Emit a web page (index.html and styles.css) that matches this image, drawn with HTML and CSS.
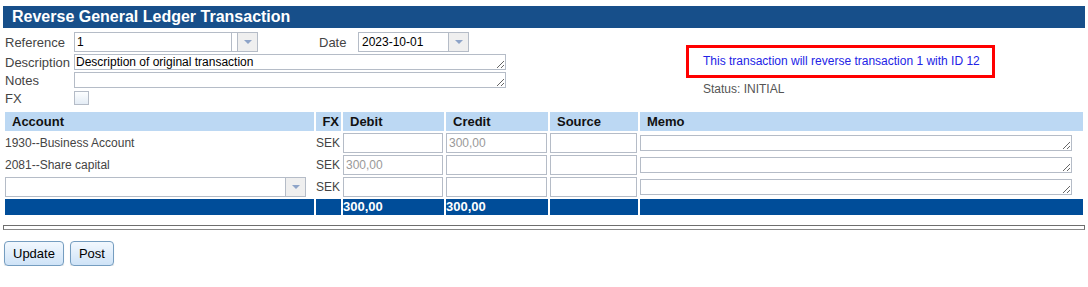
FILE: index.html
```html
<!DOCTYPE html>
<html>
<head>
<meta charset="utf-8">
<title>Reverse General Ledger Transaction</title>
<link rel="stylesheet" href="styles.css">
</head>
<body>
<div class="page">
  <h1 class="title">Reverse General Ledger Transaction</h1>
  <div class="top">
    <div class="form">
      <div class="row row-ref">
        <span class="lbl">Reference</span>
        <div class="combo combo-ref">
          <span class="val">1</span>
          <span class="valid"></span>
          <span class="arrow"><i></i></span>
        </div>
        <span class="lbl lbl-date">Date</span>
        <div class="combo combo-date">
          <span class="val">2023-10-01</span>
          <span class="arrow"><i></i></span>
        </div>
      </div>
      <div class="row row-ta">
        <span class="lbl">Description</span>
        <textarea class="ta" rows="1">Description of original transaction</textarea>
      </div>
      <div class="row row-ta">
        <span class="lbl">Notes</span>
        <textarea class="ta" rows="1"></textarea>
      </div>
      <div class="row row-fx">
        <span class="lbl">FX</span>
        <span class="check"></span>
      </div>
    </div>
    <div class="info">
      <div class="notice">This transaction will reverse transaction 1 with ID 12</div>
      <div class="status">Status: INITIAL</div>
    </div>
  </div>

  <table class="lines">
    <colgroup>
      <col class="c-acc"><col class="c-fx"><col class="c-deb"><col class="c-cred"><col class="c-src"><col class="c-memo">
    </colgroup>
    <thead>
      <tr><th>Account</th><th class="fx">FX</th><th>Debit</th><th>Credit</th><th>Source</th><th>Memo</th></tr>
    </thead>
    <tbody>
      <tr>
        <td class="acc">1930--Business Account</td>
        <td class="cur">SEK</td>
        <td><input class="fld" type="text"></td>
        <td><input class="fld" type="text" placeholder="300,00"></td>
        <td><input class="fld" type="text"></td>
        <td><textarea class="memo" rows="1"></textarea></td>
      </tr>
      <tr>
        <td class="acc">2081--Share capital</td>
        <td class="cur">SEK</td>
        <td><input class="fld" type="text" placeholder="300,00"></td>
        <td><input class="fld" type="text"></td>
        <td><input class="fld" type="text"></td>
        <td><textarea class="memo" rows="1"></textarea></td>
      </tr>
      <tr>
        <td class="acc">
          <div class="combo combo-acc">
            <span class="val"></span>
            <span class="arrow"><i></i></span>
          </div>
        </td>
        <td class="cur">SEK</td>
        <td><input class="fld" type="text"></td>
        <td><input class="fld" type="text"></td>
        <td><input class="fld" type="text"></td>
        <td><textarea class="memo" rows="1"></textarea></td>
      </tr>
    </tbody>
    <tfoot>
      <tr><td></td><td></td><td>300,00</td><td>300,00</td><td></td><td></td></tr>
    </tfoot>
  </table>

  <div class="sep"></div>

  <div class="buttons">
    <button class="btn" type="button">Update</button>
    <button class="btn" type="button">Post</button>
  </div>
</div>
</body>
</html>
```

FILE: styles.css
```css
html, body {
  margin: 0;
  padding: 0;
  background: #fff;
}
body {
  font-family: "Liberation Sans", Arial, sans-serif;
  font-size: 13px;
  color: #444;
}
.page {
  margin: 6px 3px 0 3px;
}
.title {
  margin: 0;
  height: 22px;
  line-height: 22px;
  background: #174f8a;
  color: #fff;
  font-size: 16px;
  font-weight: bold;
  padding-left: 9px;
}
.top {
  display: flex;
  margin-top: 4px;
}
.form {
  width: 503px;
  padding-left: 2px;
  box-sizing: border-box;
}
.row {
  display: flex;
  align-items: center;
  margin-bottom: 2px;
}
.row-ref { height: 20px; }
.row-ta { height: 16px; }
.row-fx { height: 16px; margin-bottom: 0; }
.lbl {
  width: 69px;
  flex: none;
  color: #444;
}
.lbl-date {
  width: 39px;
  margin-left: 61px;
}
.combo {
  display: flex;
  height: 20px;
  box-sizing: border-box;
  border: 1px solid #b5bcc7;
  background: #fff;
}
.combo .val {
  flex: 1;
  color: #000;
  padding-left: 2px;
  line-height: 18px;
  font-size: 12px;
}
.combo .valid {
  width: 5px;
  border-left: 1px solid #b5bcc7;
}
.combo .arrow {
  width: 19px;
  border-left: 1px solid #b5bcc7;
  background: #efefef;
  display: flex;
  align-items: center;
  justify-content: center;
}
.combo .arrow i {
  width: 0;
  height: 0;
  border-left: 4px solid transparent;
  border-right: 4px solid transparent;
  border-top: 4px solid #8ea4c8;
}
.combo-ref { width: 184px; }
.combo-date { width: 111px; }
.combo-date .val { padding-left: 3px; }
.combo-acc { width: 301px; }
.ta {
  width: 432px;
  height: 16px;
  box-sizing: border-box;
  border: 1px solid #b5bcc7;
  padding: 0 1px;
  margin: 0;
  font-family: "Liberation Sans", Arial, sans-serif;
  font-size: 12px;
  line-height: 14px;
  color: #000;
  overflow: hidden;
  resize: both;
}
.check {
  width: 15px;
  height: 14px;
  box-sizing: border-box;
  border: 1px solid #b5bcc7;
  background: linear-gradient(#fdfeff, #e4ecf5);
}
.info {
  margin-left: 180px;
  margin-top: 13px;
}
.notice {
  width: 309px;
  height: 33px;
  box-sizing: border-box;
  border: 3px solid #f00;
  color: #2323e6;
  font-size: 12px;
  line-height: 27px;
  padding-left: 14px;
}
.status {
  margin-top: 4px;
  padding-left: 17px;
  font-size: 12px;
  line-height: 15px;
  color: #555;
}
.lines {
  margin-top: 4px;
  width: 1082px;
  table-layout: fixed;
  border-collapse: separate;
  border-spacing: 2px;
}
.c-acc { width: 309px; }
.c-fx { width: 25px; }
.c-deb { width: 101px; }
.c-cred { width: 102px; }
.c-src { width: 88px; }
.c-memo { width: 443px; }
.lines th {
  background: #bcd8f3;
  color: #111;
  font-weight: bold;
  text-align: left;
  height: 19px;
  padding: 0 0 0 7px;
  font-size: 13px;
}
.lines th.fx {
  text-align: right;
  padding: 0 2px 0 0;
}
.lines td {
  padding: 0;
  height: 20px;
  vertical-align: middle;
  font-size: 12px;
}
.lines td.acc { color: #444; }
.lines td.cur { text-align: right; color: #444; padding-right: 2px; }
.fld {
  display: block;
  width: calc(100% - 1px);
  height: 20px;
  box-sizing: border-box;
  border: 1px solid #b5bcc7;
  margin: 0;
  padding: 0 2px;
  font-family: "Liberation Sans", Arial, sans-serif;
  font-size: 12px;
  color: #000;
  background: #fff;
}
.fld::placeholder { color: #999; }
.memo {
  display: block;
  width: 432px;
  height: 16px;
  box-sizing: border-box;
  border: 1px solid #b5bcc7;
  margin: 0;
  padding: 0 2px;
  font-family: "Liberation Sans", Arial, sans-serif;
  font-size: 12px;
  line-height: 14px;
  overflow: hidden;
  resize: both;
}
.lines tfoot td {
  height: 16px;
  background: #004d99;
  color: #fff;
  font-weight: bold;
  font-size: 13px;
  line-height: 16px;
}
.sep {
  margin-top: 8px;
  height: 3px;
  border: 1px solid #6e6e6e;
  border-bottom-color: #888;
}
.buttons {
  display: flex;
  gap: 6px;
  margin-top: 11px;
  margin-left: 1px;
}
.btn {
  height: 25px;
  padding: 0 8px;
  border: 1px solid #759dc0;
  border-radius: 4px;
  background: linear-gradient(#f2f8fe, #cfe3f7);
  box-shadow: 0 1px 1px rgba(0,0,0,0.15);
  font-family: "Liberation Sans", Arial, sans-serif;
  font-size: 13px;
  color: #000;
}
```
